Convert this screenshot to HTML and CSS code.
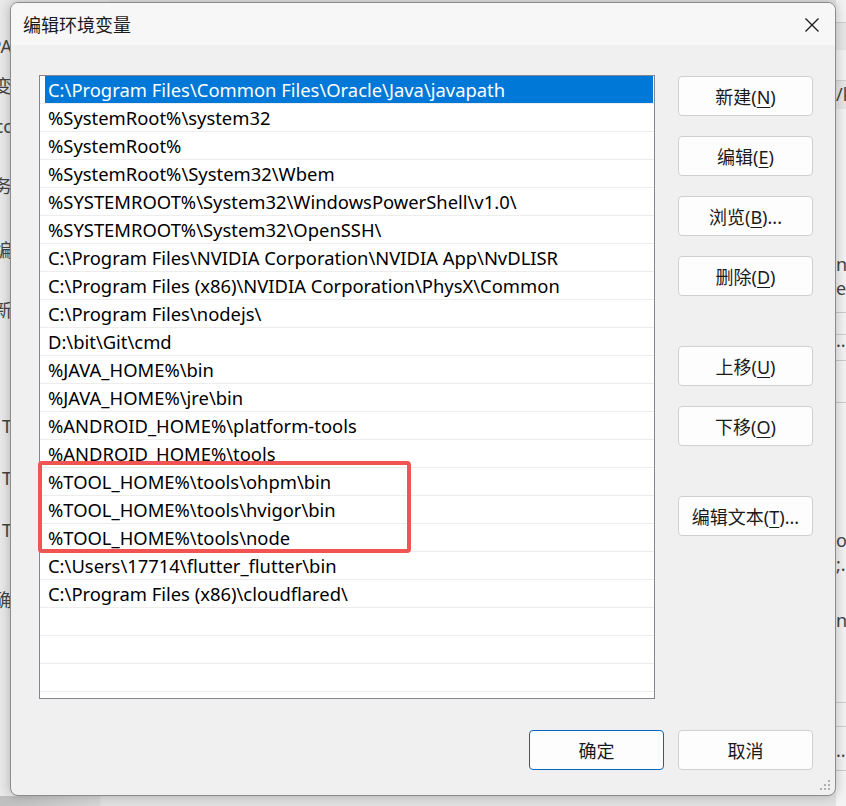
FILE: index.html
```html
<!DOCTYPE html>
<html>

<head>
    <title>编辑环境变量</title>
    <link rel="stylesheet" href="styles.css">
</head>

<body>
    <div class="desk">
        <!-- window behind, left side -->
        <div class="backLeft">
            <span style="top: 34px">PA</span>
            <span style="top: 74px">变</span>
            <span style="top: 114px">cc</span>
            <span style="top: 174px">务</span>
            <span style="top: 238px">编</span>
            <span style="top: 298px">新</span>
            <span style="top: 414px">T</span>
            <span style="top: 466px">T</span>
            <span style="top: 518px">T</span>
            <span style="top: 588px">确</span>
        </div>
        <div class="backBottom"></div>

        <!-- window behind, right side -->
        <div class="backRight">
            <div class="band" style="top: 22px; height: 27px"></div>
            <div class="band" style="top: 80px; height: 28px"></div>
            <div class="line" style="top: 312px"></div>
            <div class="line" style="top: 334px"></div>
            <div class="line" style="top: 360px"></div>
            <div class="line" style="top: 402px"></div>
            <div class="line" style="top: 702px"></div>
            <div class="line" style="top: 726px"></div>
            <div class="line" style="top: 770px"></div>
            <span style="top: 82px">/k</span>
            <span style="top: 252px">n\</span>
            <span style="top: 276px">e</span>
            <span style="top: 328px">..</span>
            <span style="top: 528px">o.</span>
            <span style="top: 552px">;.</span>
            <span style="top: 608px">n</span>
            <span style="top: 738px">...</span>
        </div>

        <div class="dialog">
            <div class="titlebar">
                <span class="title">编辑环境变量</span>
                <svg class="close" width="16" height="16" viewBox="0 0 16 16">
                    <path d="M1.5 1.5 L14.5 14.5 M14.5 1.5 L1.5 14.5" stroke="#1a1a1a" stroke-width="1.3" fill="none" />
                </svg>
            </div>

            <div class="main">
                <div class="list">
                    <div class="row selected">C:\Program Files\Common Files\Oracle\Java\javapath</div>
                    <div class="row">%SystemRoot%\system32</div>
                    <div class="row">%SystemRoot%</div>
                    <div class="row">%SystemRoot%\System32\Wbem</div>
                    <div class="row">%SYSTEMROOT%\System32\WindowsPowerShell\v1.0\</div>
                    <div class="row">%SYSTEMROOT%\System32\OpenSSH\</div>
                    <div class="row">C:\Program Files\NVIDIA Corporation\NVIDIA App\NvDLISR</div>
                    <div class="row">C:\Program Files (x86)\NVIDIA Corporation\PhysX\Common</div>
                    <div class="row">C:\Program Files\nodejs\</div>
                    <div class="row">D:\bit\Git\cmd</div>
                    <div class="row">%JAVA_HOME%\bin</div>
                    <div class="row">%JAVA_HOME%\jre\bin</div>
                    <div class="row">%ANDROID_HOME%\platform-tools</div>
                    <div class="row">%ANDROID_HOME%\tools</div>
                    <div class="row">%TOOL_HOME%\tools\ohpm\bin</div>
                    <div class="row">%TOOL_HOME%\tools\hvigor\bin</div>
                    <div class="row">%TOOL_HOME%\tools\node</div>
                    <div class="row">C:\Users\17714\flutter_flutter\bin</div>
                    <div class="row">C:\Program Files (x86)\cloudflared\</div>
                    <div class="row"></div>
                    <div class="row"></div>
                    <div class="row"></div>
                    <div class="row"></div>
                </div>

                <div class="side">
                    <div class="group">
                        <button class="btn">新建(<u>N</u>)</button>
                        <button class="btn">编辑(<u>E</u>)</button>
                        <button class="btn">浏览(<u>B</u>)...</button>
                        <button class="btn">删除(<u>D</u>)</button>
                    </div>
                    <div class="group">
                        <button class="btn">上移(<u>U</u>)</button>
                        <button class="btn">下移(<u>O</u>)</button>
                    </div>
                    <div class="group">
                        <button class="btn">编辑文本(<u>T</u>)...</button>
                    </div>
                </div>
            </div>

            <div class="footer">
                <button class="btn primary">确定</button>
                <button class="btn">取消</button>
            </div>

            <!-- red highlight drawn over the list -->
            <div class="mark"></div>

            <svg class="grip" width="12" height="12" viewBox="0 0 12 12">
                <rect x="8" y="0" width="2" height="2" fill="#b0b0b0" />
                <rect x="4" y="4" width="2" height="2" fill="#b0b0b0" />
                <rect x="8" y="4" width="2" height="2" fill="#b0b0b0" />
                <rect x="0" y="8" width="2" height="2" fill="#b0b0b0" />
                <rect x="4" y="8" width="2" height="2" fill="#b0b0b0" />
                <rect x="8" y="8" width="2" height="2" fill="#b0b0b0" />
            </svg>
        </div>
    </div>
</body>

</html>
```
FILE: styles.css
```css
body {
    margin: 0;
    font-family: "Noto Sans", "Noto Sans CJK SC", sans-serif;
    background-color: #d9d9d9;
}

.desk {
    position: relative;
    width: 846px;
    height: 806px;
    overflow: hidden;
    background-color: #e4e4e4;
}

.backLeft {
    position: absolute;
    left: 0;
    top: 0;
    width: 110px;
    height: 806px;
    background-color: #e9e9e9;
}

.backLeft span,
.backRight span {
    position: absolute;
    font-size: 18px;
    color: #444444;
    line-height: 24px;
}

.backLeft span {
    right: 98px;
}

.backBottom {
    position: absolute;
    left: 0;
    top: 796px;
    width: 846px;
    height: 10px;
    background: linear-gradient(to right, #bfbfbf, #d8d8d8 100px, #e2e2e2 101px);
}

.backRight {
    position: absolute;
    left: 836px;
    top: 0;
    width: 10px;
    height: 806px;
    background-color: #f3f3f3;
}

.backRight span {
    left: 0;
}

.backRight .band {
    position: absolute;
    left: 0;
    width: 10px;
    background-color: #e6e6e6;
    border-top: 1px solid #cfcfcf;
}

.backRight .line {
    position: absolute;
    left: 0;
    width: 10px;
    height: 1px;
    background-color: #cccccc;
}

.dialog {
    position: absolute;
    left: 10px;
    top: 2px;
    width: 824px;
    height: 792px;
    background-color: #f0f0f0;
    border: 1px solid #8c8c8c;
    border-radius: 8px;
    box-shadow: 0 0 12px rgba(0, 0, 0, 0.25);
    overflow: hidden;
}

.titlebar {
    height: 42px;
    display: flex;
    align-items: center;
    justify-content: space-between;
    padding: 0 15px 0 12px;
    background-color: #f7f7f7;
}

.title {
    font-family: "Noto Sans CJK SC", sans-serif;
    font-size: 18px;
    color: #1a1a1a;
}

.close {
    margin-top: 2px;
}

.main {
    display: flex;
    padding: 30px 0 0 28px;
}

.list {
    width: 614px;
    height: 622px;
    background-color: #ffffff;
    border: 1px solid #82878f;
    overflow: hidden;
}

.row {
    height: 27px;
    line-height: 27px;
    padding-left: 8px;
    border-bottom: 1px solid #ededed;
    font-size: 18.4px;
    color: #000000;
    white-space: nowrap;
}

.row.selected {
    color: #ffffff;
    background: linear-gradient(to right, #ffffff 5px, #0078d7 5px, #0078d7 613px, #ffffff 613px);
}

.side {
    margin-left: 23px;
    padding-top: 1px;
    display: flex;
    flex-direction: column;
    gap: 50px;
}

.group {
    display: flex;
    flex-direction: column;
    gap: 20px;
}

.btn {
    width: 135px;
    height: 40px;
    padding: 0;
    font-family: "Noto Sans", "Noto Sans CJK SC", sans-serif;
    font-size: 18px;
    color: #1a1a1a;
    background-color: #fdfdfd;
    border: 1px solid #d0d0d0;
    border-radius: 4px;
}

.btn u {
    text-underline-offset: 3px;
    text-decoration-thickness: 1px;
}

.btn.primary {
    border-color: #0067c0;
}

.footer {
    display: flex;
    justify-content: flex-end;
    gap: 14px;
    padding: 31px 22px 0 0;
}

.mark {
    position: absolute;
    left: 27px;
    top: 458px;
    width: 365px;
    height: 84px;
    border: 4px solid #f25353;
    border-radius: 4px;
}

.grip {
    position: absolute;
    right: 3px;
    bottom: 3px;
}
```
